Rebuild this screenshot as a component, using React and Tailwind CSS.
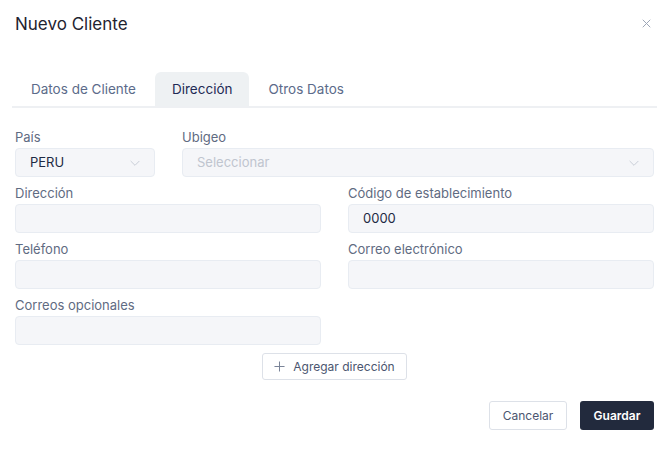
import { useState } from "react";

const Chevron = () => (
  <svg width="14" height="14" viewBox="0 0 24 24" fill="none" stroke="#c2c8d2" strokeWidth="1.5" strokeLinecap="round" strokeLinejoin="round">
    <path d="M5 9l7 7 7-7" />
  </svg>
);

const Field = ({ label, value, className = "" }) => (
  <div className={className}>
    <div className="text-[13px] leading-[14px] text-[#5f6b82] mb-[4px]">{label}</div>
    <div className="h-[29px] rounded-[4px] border border-[#e8ecf2] bg-[#f5f6f9] px-[14px] flex items-center text-[13px] text-[#1e2a44]">
      {value}
    </div>
  </div>
);

const App = () => {
  const [tab, setTab] = useState("Dirección");
  const tabs = ["Datos de Cliente", "Dirección", "Otros Datos"];

  return (
    <div className="w-[667px] h-[450px] bg-white relative" style={{ fontFamily: "Inter, 'Open Sans', sans-serif" }}>
      <div className="pl-[15px] pr-[13px] pt-[13px]">
        <div className="flex items-center justify-between h-[24px]">
          <h1 className="text-[17px] text-[#1f2330] font-normal">Nuevo Cliente</h1>
          <svg width="9" height="9" viewBox="0 0 12 12" className="mr-[3px] mt-[-4px]" stroke="#9aa3b5" strokeWidth="1.3">
            <path d="M1 1l10 10M11 1L1 11" />
          </svg>
        </div>

        <div className="mt-[35px] flex border-b-2 border-[#eef0f3] mx-[-3px]">
          {tabs.map((t) => (
            <button
              key={t}
              onClick={() => setTab(t)}
              className={
                t === tab
                  ? "h-[34px] px-[17px] rounded-t-[6px] bg-[#eef1f3] text-[13.5px] text-[#1f2a55]"
                  : "h-[34px] px-[19px] text-[13.5px] text-[#5c6b8a]"
              }
            >
              {t}
            </button>
          ))}
        </div>

        <div className="mt-[22px] flex gap-[27px]">
          <div className="w-[140px]">
            <div className="text-[13px] leading-[14px] text-[#5f6b82] mb-[4px]">País</div>
            <div className="h-[29px] rounded-[4px] border border-[#e8ecf2] bg-[#f5f6f9] pl-[14px] pr-[12px] flex items-center justify-between text-[13px] text-[#1e2a44]">
              PERU
              <Chevron />
            </div>
          </div>
          <div className="flex-1">
            <div className="text-[13px] leading-[14px] text-[#5f6b82] mb-[4px]">Ubigeo</div>
            <div className="h-[29px] rounded-[4px] border border-[#e8ecf2] bg-[#f5f6f9] pl-[14px] pr-[12px] flex items-center justify-between text-[13px] text-[#c0c5cf]">
              Seleccionar
              <Chevron />
            </div>
          </div>
        </div>

        <div className="mt-[9px] grid grid-cols-2 gap-x-[27px] gap-y-[9px]">
          <Field label="Dirección" />
          <Field label="Código de establecimiento" value="0000" />
          <Field label="Teléfono" />
          <Field label="Correo electrónico" />
          <Field label="Correos opcionales" />
        </div>

        <div className="mt-[8px] flex justify-center">
          <button className="h-[27px] px-[11px] flex items-center gap-[8px] rounded-[3px] border border-[#dde1e8] text-[12px] text-[#4b5670]">
            <svg width="11" height="11" viewBox="0 0 12 12" stroke="#7a8498" strokeWidth="1.1">
              <path d="M6 0.5v11M0.5 6h11" />
            </svg>
            Agregar dirección
          </button>
        </div>

        <div className="mt-[21px] flex justify-end gap-[13px]">
          <button className="h-[29px] w-[78px] rounded-[3px] border border-[#dde1e8] text-[12px] text-[#4b5670]">
            Cancelar
          </button>
          <button className="h-[29px] w-[74px] rounded-[3px] bg-[#222a3d] text-[12px] font-semibold text-white">
            Guardar
          </button>
        </div>
      </div>
    </div>
  );
};

export default App;
